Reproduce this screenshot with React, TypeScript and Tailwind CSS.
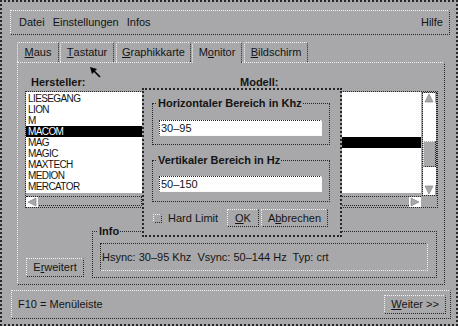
import React from 'react';

const raised =
  'border border-dotted border-t-[#f4f4f4] border-l-[#f4f4f4] border-r-[#262626] border-b-[#262626]';
const sunken =
  'border border-dotted border-t-[#262626] border-l-[#262626] border-r-[#f4f4f4] border-b-[#f4f4f4]';
const groove = 'border border-dotted border-[#262626]';

const makers = ['LIESEGANG', 'LION', 'M', 'MACOM', 'MAG', 'MAGIC', 'MAXTECH', 'MEDION', 'MERCATOR'];

const Arrow = ({ dir }: { dir: 'up' | 'down' | 'left' | 'right' }) => {
  const pts = {
    up: '5,1 9,9 1,9',
    down: '1,1 9,1 5,9',
    left: '1,5 9,1 9,9',
    right: '9,5 1,1 1,9',
  }[dir];
  return (
    <div className="w-[12px] h-[10px] bg-white flex items-center justify-center shrink-0">
      <svg width="10" height="10" viewBox="0 0 10 10">
        <polygon points={pts} fill="#a8a8aa" stroke="#7a7a7a" strokeWidth="0.6" />
      </svg>
    </div>
  );
};

const Tab = ({ w, pre, u, post, active }: { w: string; pre: string; u: string; post: string; active?: boolean }) => (
  <div
    className={`${w} flex items-center justify-center rounded-t-[2px] border-t border-l border-r border-dotted border-t-[#f4f4f4] border-l-[#f4f4f4] border-r-[#262626] ${
      active ? 'h-[21px] -mb-[1px] relative z-10 bg-[#a8a8aa] pb-[1px]' : 'h-[20px]'
    }`}
  >
    {pre}
    <span className="underline underline-offset-[1px]">{u}</span>
    {post}
  </div>
);

const App = () => {
  return (
    <div className="relative w-[458px] h-[326px] bg-[#a8a8aa] border-2 border-dotted border-[#262626] text-[11px] text-[#141414] font-['Liberation_Sans',Arial,sans-serif] overflow-hidden">
      {/* menu bar */}
      <div className={`${raised} mt-[8px] ml-[8px] mr-[6px] h-[25px] flex items-center pl-2 pr-[6px]`}>
        <div className="flex gap-2">
          <span>Datei</span>
          <span>Einstellungen</span>
          <span>Infos</span>
        </div>
        <span className="ml-auto">Hilfe</span>
      </div>

      {/* tabs */}
      <div className="flex items-end h-[20px] mt-[7px] ml-[15px]">
        <Tab w="w-[42px]" pre="" u="M" post="aus" />
        <div className="ml-[1px]">
          <Tab w="w-[54px]" pre="" u="T" post="astatur" />
        </div>
        <div className="ml-[2px]">
          <Tab w="w-[75px]" pre="" u="G" post="raphikkarte" />
        </div>
        <div className="ml-[1px] relative z-10">
          <Tab w="w-[50px]" pre="M" u="o" post="nitor" active />
        </div>
        <div className="ml-[2px]">
          <Tab w="w-[64px]" pre="" u="B" post="ildschirm" />
        </div>
      </div>

      {/* tab panel */}
      <div className={`${raised} relative h-[223px] ml-[15px] mr-[11px] flex flex-col pt-[12px] pl-[7px] pr-[6px] pb-[6px]`}>
        <div className="flex">
          {/* Hersteller */}
          <div className="w-[118px]">
            <div className="h-[14px] leading-[14px] pl-[6px] font-bold">Hersteller:</div>
            <div className={`${groove} mt-[2px] pb-[1px]`}>
              <div className="h-[101px] bg-white pt-[1px] text-[10px] tracking-[-0.6px]">
                {makers.map((m) => (
                  <div
                    key={m}
                    className={`h-[11px] leading-[11px] pl-[2px] ${m === 'MACOM' ? 'bg-black text-white' : ''}`}
                  >
                    {m}
                  </div>
                ))}
              </div>
              <div className={`mt-[3px] h-[10px] flex ${groove} border-l-0`}>
                <Arrow dir="left" />
                <div className="flex-1" />
              </div>
            </div>
          </div>

          {/* Modell */}
          <div className="ml-[90px] flex-1">
            <div className="h-[14px] leading-[14px] pl-[7px] font-bold">Modell:</div>
            <div className={`${groove} mt-[2px] flex pb-[1px]`}>
              <div className="flex-1">
                <div className="h-[101px] bg-white pt-[1px]">
                  {[0, 1, 2, 3, 4, 5, 6, 7, 8].map((i) => (
                    <div key={i} className={`h-[11px] ${i === 4 ? 'bg-black' : ''}`} />
                  ))}
                </div>
                <div className={`mt-[3px] h-[10px] flex ${groove} border-r-0`}>
                  <div className="flex-1" />
                  <Arrow dir="right" />
                </div>
              </div>
              <div className={`ml-[1px] w-[15px] h-[104px] ${groove} flex flex-col`}>
                <Arrow dir="up" />
                <div className="h-[38px] bg-white" />
                <div className={`h-[26px] ${raised}`} />
                <div className="flex-1 bg-white" />
                <Arrow dir="down" />
              </div>
            </div>
          </div>
        </div>

        {/* bottom row */}
        <div className="mt-auto flex items-end">
          <div className={`${raised} ml-[1px] mb-[1px] w-[58px] h-[19px] flex items-center justify-center`}>
            E<span className="underline underline-offset-[1px]">r</span>weitert
          </div>
          <fieldset className={`${groove} flex-1 ml-[8px] mr-[1px] pl-[7px] pr-[8px] pt-[5px] pb-[6px]`}>
            <legend className="-ml-[2px] px-[1px] font-bold leading-[14px]">Info</legend>
            <div className={`${sunken} h-[28px] flex items-center pl-[1px] whitespace-pre`}>
              {'Hsync: 30–95 Khz  Vsync: 50–144 Hz  Typ: crt'}
            </div>
          </fieldset>
        </div>

        {/* dialog */}
        <div className="absolute left-[124px] top-[25px] w-[200px] h-[149px] z-20 bg-[#a8a8aa] border-2 border-dotted border-[#262626] pt-[6px] pl-[8px] pr-[10px]">
          <fieldset className={`${groove} pl-[6px] pr-[7px] pt-[10px] pb-[8px]`}>
            <legend className="-ml-[2px] px-[1px] font-bold leading-[14px]">Horizontaler Bereich in Khz</legend>
            <div className={`${sunken} h-[16px] bg-white pl-[1px] flex items-center`}>30–95</div>
          </fieldset>
          <fieldset className={`${groove} mt-[8px] pl-[6px] pr-[7px] pt-[9px] pb-[9px]`}>
            <legend className="-ml-[2px] px-[1px] font-bold leading-[14px]">Vertikaler Bereich in Hz</legend>
            <div className={`${sunken} h-[16px] bg-white pl-[1px] flex items-center`}>50–150</div>
          </fieldset>
          <div className="mt-[7px] h-[18px] flex items-center">
            <span className={`${raised} ml-[1px] w-[9px] h-[9px]`} />
            <span className="ml-[6px]">Hard Limit</span>
            <div className={`${raised} ml-auto w-[32px] h-[18px] flex items-center justify-center`}>
              <span className="underline underline-offset-[1px]">O</span>K
            </div>
            <div className={`${raised} ml-[2px] mr-[2px] w-[67px] h-[18px] flex items-center justify-center`}>
              A<span className="underline underline-offset-[1px]">b</span>brechen
            </div>
          </div>
        </div>
      </div>

      {/* status bar */}
      <div className={`${raised} mt-[5px] ml-[9px] mr-[5px] h-[29px] flex items-center pl-[6px] pr-[4px]`}>
        <span>F10 = Menüleiste</span>
        <div className={`${raised} ml-auto w-[62px] h-[19px] flex items-center justify-center`}>
          <span className="underline underline-offset-[1px]">W</span>eiter &gt;&gt;
        </div>
      </div>

      {/* mouse pointer */}
      <svg className="absolute left-[87px] top-[64px]" width="13" height="13" viewBox="0 0 13 13">
        <polygon points="1,1 8,3 3,8" fill="#000" />
        <line x1="4" y1="4" x2="11" y2="11" stroke="#000" strokeWidth="1.6" />
      </svg>
    </div>
  );
};

export default App;
